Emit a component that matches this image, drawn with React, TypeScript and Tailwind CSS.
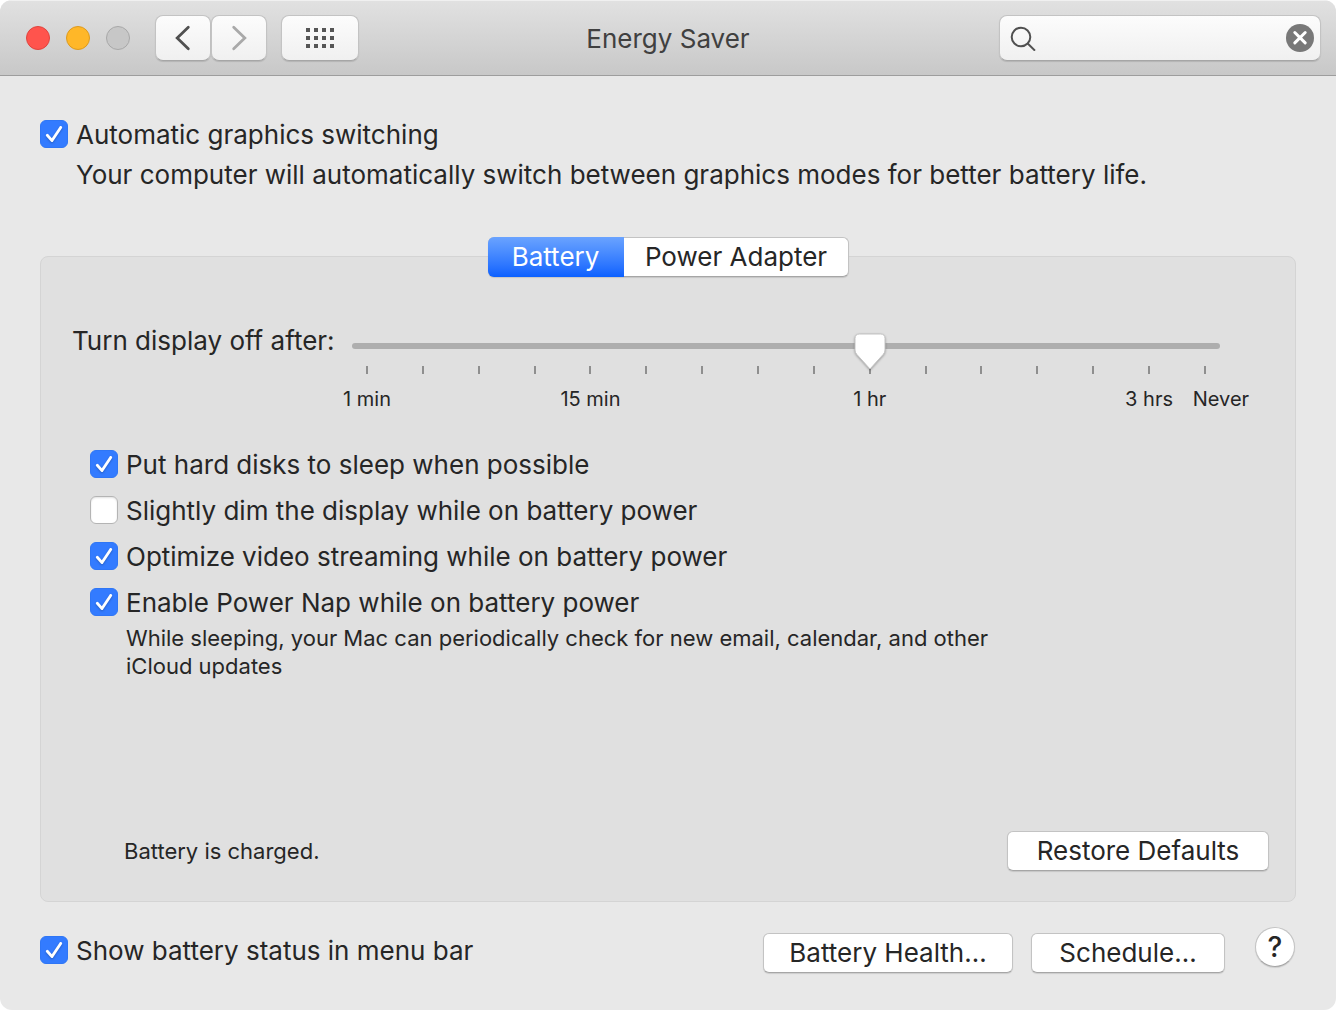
import { useId, useState, type ReactNode } from "react";
import { clsx } from "clsx";

const TABS = [
  { name: "Battery",       width: "w-[136px]" },
  { name: "Power Adapter", width: "w-[225px]" },
];

// One entry per slider stop; most stops have no caption
const STOPS = [
  "1 min", "", "", "", "15 min", "", "", "",
  "", "1 hr", "", "", "", "", "3 hrs", "Never",
];

const OPTIONS = [
  { label: "Put hard disks to sleep when possible",           checked: true },
  { label: "Slightly dim the display while on battery power", checked: false },
  { label: "Optimize video streaming while on battery power", checked: true },
  { label: "Enable Power Nap while on battery power",         checked: true },
];

const RAISED = "border border-[#c3c3c3] border-b-[#a6a6a6] shadow-[0_1px_1px_rgba(0,0,0,0.12)]";

function Checkbox({ label, defaultChecked }: { label: string; defaultChecked: boolean }) {
  const id = useId();
  return (
    <div className="flex h-7 items-center gap-2">
      <span className="grid size-7 shrink-0">
        <input
          id={id}
          type="checkbox"
          defaultChecked={defaultChecked}
          className="peer col-start-1 row-start-1 size-7 appearance-none rounded-md border border-[#b4b4b4] bg-white shadow-[inset_0_1px_2px_rgba(0,0,0,0.12)] checked:border-[#2f76f5] checked:bg-[#337bff] checked:shadow-none"
        />
        <svg
          viewBox="0 0 28 28"
          className="pointer-events-none col-start-1 row-start-1 hidden size-7 drop-shadow-[0_1px_1px_rgba(0,0,0,0.25)] peer-checked:block"
          fill="none"
          stroke="white"
          strokeWidth="2.8"
          strokeLinecap="round"
          strokeLinejoin="round"
        >
          <path d="M7.3 15.3 12 20.6 20.7 7.4" />
        </svg>
      </span>
      <label htmlFor={id} className="pt-0.5">{label}</label>
    </div>
  );
}

function PushButton({ children, className }: { children: ReactNode; className?: string }) {
  return (
    <button className={clsx("h-10 rounded-md bg-white text-center", RAISED, className)}>
      {children}
    </button>
  );
}

function ToolbarButton({ label, className, children }: { label: string; className: string; children: ReactNode }) {
  return (
    <button
      aria-label={label}
      className={clsx("flex h-[46px] items-center justify-center rounded-lg bg-linear-to-b from-[#fcfcfc] to-[#f0f0f0]", RAISED, className)}
    >
      {children}
    </button>
  );
}

function TitleBar() {
  return (
    <header className="grid h-19 grid-cols-[1fr_auto_1fr] items-center border-t border-b border-t-[#f0f0f0] border-b-[#9d9d9d] bg-linear-to-b from-[#e1e1e1] to-[#c8c8c8] px-[15px]">
      <div className="flex items-center pl-[11px]">
        <div className="mr-[25px] flex gap-4">
          <button aria-label="Close" className="size-6 rounded-full border border-[#e0443e] bg-[#ff544d]" />
          <button aria-label="Minimize" className="size-6 rounded-full border border-[#dd9a1e] bg-[#ffb728]" />
          <button aria-label="Zoom" disabled className="size-6 rounded-full border border-[#a8a8a8] bg-[#c7c7c7]" />
        </div>
        <ToolbarButton label="Back" className="w-14">
          <svg viewBox="0 0 16 26" className="h-[26px] w-4" fill="none" stroke="#505050" strokeWidth="2.8" strokeLinecap="round">
            <path d="M13.3 2.2 2.2 13 13.3 23.8" />
          </svg>
        </ToolbarButton>
        <ToolbarButton label="Forward" className="w-14">
          <svg viewBox="0 0 16 26" className="h-[26px] w-4" fill="none" stroke="#a9a9a9" strokeWidth="2.8" strokeLinecap="round">
            <path d="M2.7 2.2 13.8 13 2.7 23.8" />
          </svg>
        </ToolbarButton>
        <ToolbarButton label="Show All" className="ml-3.5 w-[78px]">
          <svg viewBox="0 0 28 20" className="h-5 w-7" fill="#555555">
            {[0, 8, 16].map((y) => [0, 8, 16, 24].map((x) => (
              <rect key={`${x}-${y}`} x={x} y={y} width="4" height="4" />
            )))}
          </svg>
        </ToolbarButton>
      </div>

      <h1 className="pt-0.5 text-[#404040]">Energy Saver</h1>

      <div className={clsx("flex h-[46px] w-[322px] items-center justify-self-end rounded-lg bg-linear-to-b from-[#fcfcfc] to-[#f0f0f0] pl-2.5 pr-1.5", RAISED)}>
        <svg viewBox="0 0 26 26" className="size-[26px]" fill="none" stroke="#505050" strokeWidth="2">
          <circle cx="11" cy="12" r="9.3" />
          <path d="M17.7 18.5 25 25.6" />
        </svg>
        <input aria-label="Search" type="text" className="min-w-0 flex-1 px-2 outline-none" />
        <button aria-label="Clear search">
          <svg viewBox="0 0 28 28" className="size-7" fill="none">
            <circle cx="14" cy="14" r="14" fill="#787878" />
            <path d="M8.8 8.5 19.2 18.9M19.2 8.5 8.8 18.9" stroke="white" strokeWidth="3" strokeLinecap="round" />
          </svg>
        </button>
      </div>
    </header>
  );
}

function SleepSlider() {
  const [value, setValue] = useState(9);
  const last = STOPS.length - 1;
  return (
    <div className="flex items-start">
      <label htmlFor="display-off" className="w-[280px] shrink-0 leading-8">Turn display off after:</label>
      <div className="min-w-0 flex-1 pt-[18px]">
        <div className="relative h-1.5 rounded-full bg-[#aeaeae] px-[15px]">
          <div className="relative">
            <svg
              viewBox="0 0 32 37"
              className="absolute -top-[10px] h-[37px] w-8 -translate-x-1/2 drop-shadow-[0_1px_1px_rgba(0,0,0,0.3)]"
              style={{ left: `${(value / last) * 100}%` }}
            >
              <path
                d="M5.5 1h21Q31 1 31 5.5V17q0 2.5-1.8 4.4L16 36 2.8 21.4Q1 19.5 1 17V5.5Q1 1 5.5 1Z"
                fill="white"
                stroke="#c3c3c3"
                strokeWidth="1"
              />
            </svg>
          </div>
          <input
            id="display-off"
            type="range"
            min={0}
            max={last}
            value={value}
            onChange={(e) => setValue(Number(e.target.value))}
            className="absolute inset-x-0 -top-3 h-9 w-full opacity-0"
          />
        </div>
        <div className="mt-[17px] flex justify-between px-[15px]">
          {STOPS.map((caption, i) => (
            <div key={i} className="flex h-12 w-0 flex-col items-center gap-3">
              <span className="h-2 w-0.5 shrink-0 bg-[#8f8f8f]" />
              <span className={clsx("whitespace-nowrap text-xl leading-[26px]", i === last && "pl-8")}>{caption}</span>
            </div>
          ))}
        </div>
      </div>
    </div>
  );
}

export default function App() {
  const [tab, setTab] = useState("Battery");

  return (
    <div className="min-h-screen bg-white font-['Inter',sans-serif] text-[26px] leading-8 text-[#262626]">
      <div className="flex min-h-screen flex-col overflow-hidden rounded-xl bg-[#e8e8e8]">
        <TitleBar />

        <main className="flex flex-1 flex-col px-10 pt-11 pb-[37px]">
          <Checkbox label="Automatic graphics switching" defaultChecked />
          <p className="mt-[11px] pl-9">
            Your computer will automatically switch between graphics modes for better battery life.
          </p>

          <div role="tablist" className={clsx("z-10 mt-[46px] -mb-[21px] flex h-10 self-center rounded-md bg-white", RAISED)}>
            {TABS.map(({ name, width }) => (
              <button
                key={name}
                role="tab"
                aria-selected={tab === name}
                onClick={() => setTab(name)}
                className={clsx(
                  "-my-px first:-ml-px first:rounded-l-md last:-mr-px last:rounded-r-md",
                  width,
                  tab === name && "bg-linear-to-b from-[#6aa3ff] to-[#0a60ff] text-white"
                )}
              >
                {name}
              </button>
            ))}
          </div>

          <section className="flex flex-1 flex-col rounded-lg border border-[#d4d4d4] bg-[#e0e0e0] pt-[68px] pr-[26px] pb-[30px] pl-[31px]">
            <div className="pr-[49px]">
              <SleepSlider />
            </div>

            <div className="mt-9 flex flex-col gap-[18px] pl-[18px]">
              {OPTIONS.map((option) => (
                <Checkbox key={option.label} label={option.label} defaultChecked={option.checked} />
              ))}
            </div>
            <p className="mt-2 max-w-[940px] pl-[54px] text-[22px] leading-7">
              While sleeping, your Mac can periodically check for new email, calendar, and other iCloud updates
            </p>

            <div className="mt-auto flex items-center justify-between pl-[52px]">
              <p className="text-[22px]">Battery is charged.</p>
              <PushButton className="w-[262px]">Restore Defaults</PushButton>
            </div>
          </section>

          <footer className="mt-[25px] flex items-start pr-px">
            <div className="mt-[9px] flex-1">
              <Checkbox label="Show battery status in menu bar" defaultChecked />
            </div>
            <PushButton className="mt-1.5 w-[250px]">Battery Health…</PushButton>
            <PushButton className="mt-1.5 ml-[18px] w-[194px]">Schedule…</PushButton>
            <button aria-label="Help" className={clsx("ml-[30px] size-10 rounded-full bg-white text-[28px] font-medium", RAISED)}>?</button>
          </footer>
        </main>
      </div>
    </div>
  );
}
